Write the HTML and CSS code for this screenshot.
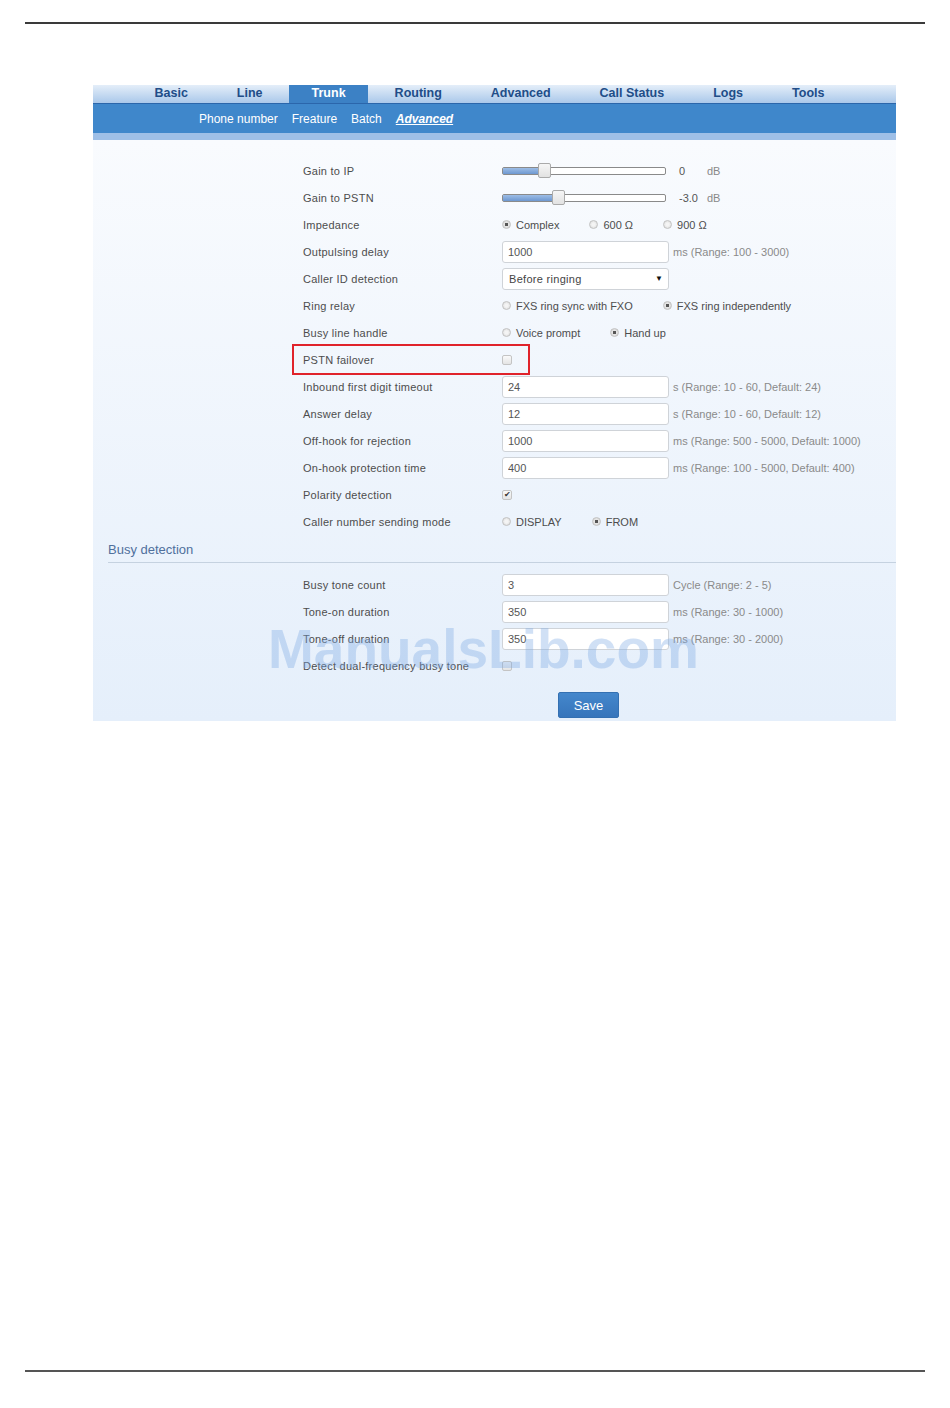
FILE: index.html
```html
<!DOCTYPE html>
<html lang="en">
<head>
    <meta charset="UTF-8">
    <meta name="viewport" content="width=device-width, initial-scale=1.0">
    <title>Trunk - Advanced</title>
    <link rel="stylesheet" href="styles.css">
</head>
<body>
<div class="page">
    <div class="rule"></div>

    <div class="panel">
        <ul class="tabs">
            <li>Basic</li>
            <li>Line</li>
            <li class="active">Trunk</li>
            <li>Routing</li>
            <li>Advanced</li>
            <li>Call Status</li>
            <li>Logs</li>
            <li>Tools</li>
        </ul>
        <div class="subtabs">
            <a>Phone number</a>
            <a>Freature</a>
            <a>Batch</a>
            <a class="current">Advanced</a>
        </div>
        <div class="strip"></div>

        <div class="content">
            <form class="settings">
                <div class="row">
                    <label>Gain to IP</label>
                    <div class="slider"><span class="fill" style="width: 42px"></span><span class="thumb" style="left: 35px"></span></div>
                    <span class="value">0</span><span class="unit">dB</span>
                </div>
                <div class="row">
                    <label>Gain to PSTN</label>
                    <div class="slider"><span class="fill" style="width: 56px"></span><span class="thumb" style="left: 49px"></span></div>
                    <span class="value">-3.0</span><span class="unit">dB</span>
                </div>
                <div class="row">
                    <label>Impedance</label>
                    <span class="opt"><input type="radio" name="imp" checked> Complex</span>
                    <span class="opt"><input type="radio" name="imp"> 600 &Omega;</span>
                    <span class="opt"><input type="radio" name="imp"> 900 &Omega;</span>
                </div>
                <div class="row">
                    <label>Outpulsing delay</label>
                    <input class="field" type="text" value="1000">
                    <span class="hint">ms (Range: 100 - 3000)</span>
                </div>
                <div class="row">
                    <label>Caller ID detection</label>
                    <div class="select"><select><option>Before ringing</option></select></div>
                </div>
                <div class="row">
                    <label>Ring relay</label>
                    <span class="opt"><input type="radio" name="ring"> FXS ring sync with FXO</span>
                    <span class="opt"><input type="radio" name="ring" checked>FXS ring independently</span>
                </div>
                <div class="row">
                    <label>Busy line handle</label>
                    <span class="opt"><input type="radio" name="busy"> Voice prompt</span>
                    <span class="opt"><input type="radio" name="busy" checked> Hand up</span>
                </div>
                <div class="row">
                    <span class="highlight"></span>
                    <label>PSTN failover</label>
                    <input type="checkbox">
                </div>
                <div class="row">
                    <label>Inbound first digit timeout</label>
                    <input class="field" type="text" value="24">
                    <span class="hint">s (Range: 10 - 60, Default: 24)</span>
                </div>
                <div class="row">
                    <label>Answer delay</label>
                    <input class="field" type="text" value="12">
                    <span class="hint">s (Range: 10 - 60, Default: 12)</span>
                </div>
                <div class="row">
                    <label>Off-hook for rejection</label>
                    <input class="field" type="text" value="1000">
                    <span class="hint">ms (Range: 500 - 5000, Default: 1000)</span>
                </div>
                <div class="row">
                    <label>On-hook protection time</label>
                    <input class="field" type="text" value="400">
                    <span class="hint">ms (Range: 100 - 5000, Default: 400)</span>
                </div>
                <div class="row">
                    <label>Polarity detection</label>
                    <input type="checkbox" checked>
                </div>
                <div class="row">
                    <label>Caller number sending mode</label>
                    <span class="opt"><input type="radio" name="mode"> DISPLAY</span>
                    <span class="opt"><input type="radio" name="mode" checked> FROM</span>
                </div>
            </form>

            <h3 class="section">Busy detection</h3>

            <form class="settings busy">
                <div class="row">
                    <label>Busy tone count</label>
                    <input class="field" type="text" value="3">
                    <span class="hint">Cycle (Range: 2 - 5)</span>
                </div>
                <div class="row">
                    <label>Tone-on duration</label>
                    <input class="field" type="text" value="350">
                    <span class="hint">ms (Range: 30 - 1000)</span>
                </div>
                <div class="row">
                    <label>Tone-off duration</label>
                    <input class="field" type="text" value="350">
                    <span class="hint">ms (Range: 30 - 2000)</span>
                </div>
                <div class="row">
                    <label>Detect dual-frequency busy tone</label>
                    <input type="checkbox">
                </div>
            </form>

            <div class="actions">
                <button type="button">Save</button>
            </div>
        </div>

        <div class="watermark">ManualsLib.com</div>
    </div>

    <div class="rule bottom"></div>
</div>
</body>
</html>
```

FILE: styles.css
```css
body {
    margin: 0;
    background: #fff;
    font-family: "Liberation Sans", Arial, sans-serif;
}
.page {
    min-height: 1408px;
    box-sizing: border-box;
    padding: 22px 25px 36px;
    display: flex;
    flex-direction: column;
}
.rule {
    border-top: 2px solid #3a3a3a;
}
.rule.bottom {
    margin-top: auto;
    border-top-color: #555;
}
.panel {
    position: relative;
    width: 803px;
    margin: 61px 0 0 68px;
}

/* main tabs */
.tabs {
    display: flex;
    gap: 4px;
    height: 18px;
    margin: 0;
    padding: 0 0 0 39px;
    list-style: none;
    background: linear-gradient(#e4eef9, #aac8ea);
    border-bottom: 1px solid #2b66ab;
}
.tabs li {
    padding: 0 22.5px;
    line-height: 17px;
    font-size: 12.5px;
    font-weight: bold;
    color: #214d88;
}
.tabs li.active {
    background: #3c81c5;
    color: #fff;
}

/* sub tabs */
.subtabs {
    display: flex;
    align-items: center;
    gap: 14px;
    height: 29px;
    padding-left: 106px;
    background: #3f87cb;
}
.subtabs a {
    color: #fff;
    font-size: 12px;
}
.subtabs a.current {
    font-weight: bold;
    font-style: italic;
    text-decoration: underline;
}
.strip {
    height: 7px;
    background: #9ebfe7;
}

.content {
    background: linear-gradient(#f9fbfe, #e5effb);
    padding: 17px 0 3px;
}

/* form rows */
.settings {
    margin: 0;
    padding-left: 210px;
}
.row {
    position: relative;
    display: flex;
    align-items: center;
    height: 27px;
    font-size: 11px;
    color: #4d4d4d;
}
.row label {
    width: 199px;
    flex: none;
    letter-spacing: 0.25px;
}
.field {
    width: 167px;
    height: 22px;
    box-sizing: border-box;
    margin: 0;
    padding: 0 5px;
    border: 1px solid #cfd3d8;
    border-radius: 3px;
    background: #fff;
    font: 11px "Liberation Sans", Arial, sans-serif;
    color: #555;
}
.hint {
    margin-left: 4px;
    color: #8a8a8a;
}

/* slider */
.slider {
    position: relative;
    width: 164px;
    height: 8px;
    box-sizing: border-box;
    border: 1px solid #8a8a8a;
    border-radius: 2px;
    background: #fff;
}
.slider .fill {
    position: absolute;
    left: 0;
    top: 0;
    bottom: 0;
    background: linear-gradient(#9dbde6, #6e98d0);
}
.slider .thumb {
    position: absolute;
    top: -5px;
    width: 13px;
    height: 15px;
    box-sizing: border-box;
    border: 1px solid #aaa;
    border-radius: 2px;
    background: linear-gradient(#f6f6f6, #e2e2e2);
}
.value {
    width: 28px;
    margin-left: 13px;
    color: #555;
}
.unit {
    color: #888;
}

/* radios and checkboxes */
.opt {
    display: inline-flex;
    align-items: center;
    margin-right: 30px;
}
input[type="radio"] {
    appearance: none;
    width: 9px;
    height: 9px;
    margin: 0 5px 0 0;
    border: 1px solid #c2c2c2;
    border-radius: 50%;
    background: radial-gradient(circle, #f4f4f4 30%, #d6d6d6);
}
input[type="radio"]:checked {
    background: radial-gradient(circle, #555 32%, #e6e6e6 40%, #cfcfcf);
}
input[type="checkbox"] {
    appearance: none;
    display: grid;
    place-items: center;
    width: 10px;
    height: 10px;
    margin: 0;
    border: 1px solid #c4c4c4;
    border-radius: 2px;
    background: linear-gradient(#fafafa, #e4e4e4);
}
input[type="checkbox"]:checked::after {
    content: "\2714";
    font-size: 8px;
    line-height: 1;
    color: #333;
}

/* select */
.select {
    position: relative;
    width: 167px;
}
.select select {
    appearance: none;
    width: 100%;
    height: 22px;
    margin: 0;
    padding: 0 6px;
    border: 1px solid #cfd3d8;
    border-radius: 3px;
    background: #fff;
    font: 11px "Liberation Sans", Arial, sans-serif;
    letter-spacing: 0.3px;
    color: #444;
}
.select::after {
    content: "\25BC";
    position: absolute;
    right: 6px;
    top: 6px;
    font-size: 8px;
    color: #111;
    pointer-events: none;
}

/* annotation box */
.highlight {
    position: absolute;
    left: -11px;
    top: -2px;
    width: 238px;
    height: 31px;
    box-sizing: border-box;
    border: 2px solid #e0232b;
}

.section {
    margin: 0 0 0 15px;
    height: 27px;
    line-height: 29px;
    border-bottom: 1px solid #c5d2e0;
    font-size: 13px;
    font-weight: normal;
    color: #50709c;
}
.settings.busy {
    margin-top: 8px;
}
.actions {
    margin-top: 13px;
    padding-left: 465px;
}
.actions button {
    width: 61px;
    height: 26px;
    border: 1px solid #3470b2;
    border-radius: 2px;
    background: linear-gradient(#4487cc, #3775bb);
    color: #fff;
    font: 13px "Liberation Sans", Arial, sans-serif;
    cursor: pointer;
}

.watermark {
    position: absolute;
    left: 175px;
    top: 537px;
    font-size: 55px;
    line-height: 55px;
    font-weight: bold;
    color: rgba(125, 168, 228, 0.36);
    pointer-events: none;
}
```
